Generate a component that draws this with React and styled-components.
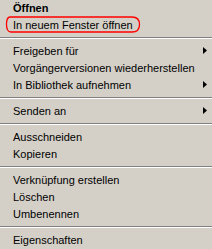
import React from "react";
import styled, { createGlobalStyle } from "styled-components";

const GROUPS = [
  [
    { label: "Öffnen", bold: true },
    { label: "In neuem Fenster öffnen", marked: true },
  ],
  [
    { label: "Freigeben für", sub: true },
    { label: "Vorgängerversionen wiederherstellen" },
    { label: "In Bibliothek aufnehmen", sub: true },
  ],
  [{ label: "Senden an", sub: true }],
  [{ label: "Ausschneiden" }, { label: "Kopieren" }],
  [
    { label: "Verknüpfung erstellen" },
    { label: "Löschen" },
    { label: "Umbenennen" },
  ],
  [{ label: "Eigenschaften" }],
];

const GlobalStyle = createGlobalStyle`
  html, body {
    margin: 0;
    padding: 0;
    background: #d4d0c8;
    overflow: hidden;
  }
`;

function SubArrow() {
  return (
    <Arrow width="4" height="7" viewBox="0 0 4 7">
      <path d="M0 0 L4 3.5 L0 7 Z" fill="#000" />
    </Arrow>
  );
}

function Mark() {
  return (
    <MarkSvg width="136" height="19" viewBox="0 0 136 19">
      <path
        d="M5 2 H127 C132 2 134.5 5 134.5 9.5 C134.5 14 132 17 127 17 H6 C3 17 1.5 14 1.5 9.5 C1.5 5.5 2.5 2 5 2 Z"
        fill="none"
        stroke="#ff0000"
        strokeWidth="1.3"
      />
    </MarkSvg>
  );
}

export default function App() {
  return (
    <>
      <GlobalStyle />
      <Menu>
        {GROUPS.map((group, gi) => (
          <React.Fragment key={gi}>
            {gi > 0 && <Separator />}
            {group.map((item) => (
              <Item key={item.label} bold={item.bold}>
                {item.label}
                {item.sub && <SubArrow />}
                {item.marked && <Mark />}
              </Item>
            ))}
          </React.Fragment>
        ))}
      </Menu>
    </>
  );
}

const Menu = styled.div`
  width: 212px;
  margin-top: -1px;
  background: #d4d0c8;
  color: #000;
  font-family: Tahoma, "Liberation Sans", Arial, sans-serif;
  font-size: 11px;
`;

const Item = styled.div`
  position: relative;
  display: flex;
  align-items: center;
  height: 17px;
  padding-left: 13px;
  font-weight: ${({ bold }) => (bold ? 700 : 400)};
  white-space: nowrap;
`;

const Arrow = styled.svg`
  position: absolute;
  left: 203px;
  top: 5px;
`;

const MarkSvg = styled.svg`
  position: absolute;
  left: 5px;
  top: -1px;
  pointer-events: none;
`;

const Separator = styled.div`
  box-sizing: border-box;
  height: 9px;
  padding-top: 4px;

  &::before {
    content: "";
    display: block;
    height: 0;
    border-top: 1px solid #808080;
    border-bottom: 1px solid #ffffff;
  }
`;
